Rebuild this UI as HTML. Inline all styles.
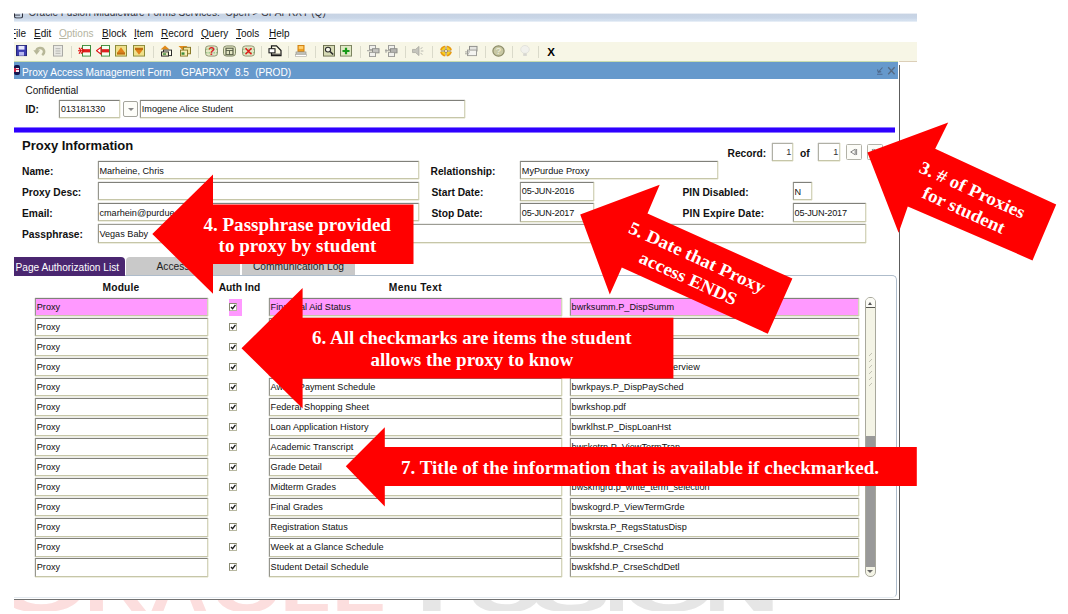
<!DOCTYPE html>
<html lang="en"><head><meta charset="utf-8"><title>Proxy Access Management Form</title>
<style>
html,body{margin:0;padding:0;background:#fff;}
body{width:1068px;height:614px;position:relative;overflow:hidden;font-family:"Liberation Sans",sans-serif;font-size:10px;color:#000;}
.a{position:absolute;white-space:nowrap;}
.b{font-weight:bold;}
.f{position:absolute;box-sizing:border-box;background:#fff;border-top:1px solid #80807a;border-left:1px solid #96968e;border-bottom:1px solid #c6c6a8;border-right:1px solid #d4d4bc;box-shadow:0 1px 0 #ededdf,1px 0 0 #f0f0e4,0 -1px 0 #ececea,-1px 0 0 #ececea;font-size:9.15px;line-height:16px;padding-left:1px;padding-top:0.7px;white-space:nowrap;overflow:hidden;color:#111;}
.pk{background:#ff99ff;}
.t{padding-left:0.4px;}
.pp{border-top-color:#9c9c94;}
.lt{border-top-color:#b0b0a6;border-left-color:#b0b0a6;color:#333;}
.r{font-size:9.15px;padding-top:0.4px;padding-left:0.6px;}
.f i{font-style:normal;letter-spacing:-0.18px;}
.lab{position:absolute;font-weight:bold;font-size:10.25px;line-height:12px;white-space:nowrap;color:#111;}
.cb{position:absolute;width:6.2px;height:5.8px;border:1px solid #8a8a72;border-right-color:#b8b8a0;border-bottom-color:#b8b8a0;background:#fff;}
.cb svg{position:absolute;left:0;top:0;}
.sep{position:absolute;top:45.5px;width:1px;height:12px;background:#dadaca;}
.ic{position:absolute;top:45px;height:12px;}
.m{position:absolute;top:26px;font-size:10px;line-height:12px;white-space:nowrap;color:#111;}
.m u{text-decoration:underline;}
.red{font-family:"Liberation Serif",serif;font-weight:bold;font-size:18px;fill:#fff;}
</style></head>
<body>
<div class="a" style="left:14px;top:13px;width:903px;height:8.1px;transform:translateY(0.6px);background:linear-gradient(#c7d3e3 0,#c9d6e7 55%,#d3dfee 75%,#d6e2f0 100%);overflow:hidden;"><div class="a" style="left:0.3px;top:-2px;width:6.6px;height:6px;border:1.2px solid #2a2c38;border-top:none;border-radius:0 0 2.5px 2.5px;"></div><div class="a" style="left:0.5px;top:0.6px;width:5px;height:1px;background:#4a4c58;"></div><div class="a" style="left:14.5px;top:-6.9px;font-size:10px;line-height:12px;color:#2e2e36;">Oracle Fusion Middleware Forms Services:&nbsp; Open &gt; GPAPRXY (Q)</div></div>
<div class="a" style="left:14px;top:22px;width:903px;height:20px;background:#fff;overflow:hidden;">
<span class="m" style="left:-4px;top:5.5px"><u>F</u>ile</span><span class="m" style="left:20px;top:5.5px"><u>E</u>dit</span><span class="m" style="left:45px;top:5.5px;color:#b4b4a0"><u>O</u>ptions</span><span class="m" style="left:88px;top:5.5px"><u>B</u>lock</span><span class="m" style="left:120px;top:5.5px"><u>I</u>tem</span><span class="m" style="left:147px;top:5.5px"><u>R</u>ecord</span><span class="m" style="left:187px;top:5.5px"><u>Q</u>uery</span><span class="m" style="left:222px;top:5.5px"><u>T</u>ools</span><span class="m" style="left:255px;top:5.5px"><u>H</u>elp</span>
</div>
<div class="a" style="left:14px;top:42px;width:903px;height:20px;background:#f7f6e6;"></div>
<div class="sep" style="left:70.5px"></div><div class="sep" style="left:152.5px"></div><div class="sep" style="left:197.5px"></div><div class="sep" style="left:261px"></div><div class="sep" style="left:288px"></div><div class="sep" style="left:315px"></div><div class="sep" style="left:360px"></div><div class="sep" style="left:404.5px"></div><div class="sep" style="left:431.5px"></div><div class="sep" style="left:458.5px"></div><div class="sep" style="left:484.5px"></div><div class="sep" style="left:511.5px"></div><div class="sep" style="left:538px"></div>
<svg class="ic" style="left:16px" width="11" height="12" viewBox="0 0 11 13" preserveAspectRatio="none"><rect x="0.5" y="0.5" width="10" height="11" fill="#3d3db0" stroke="#26267a"/><rect x="2.5" y="1" width="6" height="4" fill="#e8e8ff"/><rect x="3" y="7.5" width="5" height="4" fill="#b8b8f0"/></svg>
<svg class="ic" style="left:32.5px" width="13" height="12" viewBox="0 0 13 13" preserveAspectRatio="none"><path d="M9.2 11 C12.6 8.2 11 2.8 6.8 3.2 C4.6 3.4 3.6 5 3.6 6.6" fill="none" stroke="#b7b798" stroke-width="2.6"/><path d="M0.3 5.8h6.8L3.6 10.6z" fill="#b7b798"/></svg>
<svg class="ic" style="left:53px" width="10" height="12" viewBox="0 0 10 13" preserveAspectRatio="none"><rect x="0.5" y="0.5" width="9" height="11.5" fill="#e9e9e4" stroke="#a9a9a4"/><path d="M2.5 4h5M2.5 6.5h5M2.5 9h5" stroke="#b4b4b0" stroke-width="1"/></svg>
<svg class="ic" style="left:78px" width="13" height="12" viewBox="0 0 13 13" preserveAspectRatio="none"><rect x="4.5" y="0.5" width="8" height="11.5" fill="#f2fff0" stroke="#3c8c3c"/><rect x="5" y="4.5" width="7" height="3.5" fill="#e02020"/><path d="M0 6.2h6M3 3l3 3.2-3 3.2M1 3l2 3.2-2 3.2" stroke="#e01010" stroke-width="1.2" fill="none"/></svg>
<svg class="ic" style="left:96px" width="14" height="12" viewBox="0 0 14 13" preserveAspectRatio="none"><rect x="5.5" y="0.5" width="8" height="11.5" fill="#f2fff0" stroke="#3c8c3c"/><rect x="6" y="4.5" width="7" height="3.5" fill="#e02020"/><path d="M0.5 6.2L5 2.5v7.4z" fill="#fff" stroke="#e01010" stroke-width="1.1"/></svg>
<svg class="ic" style="left:114.5px" width="12" height="12" viewBox="0 0 12 13" preserveAspectRatio="none"><rect x="0.5" y="0.5" width="11" height="11.5" fill="#efe08a" stroke="#8a8a3a"/><path d="M2 8.5L6 2.5l4 6z" fill="#e08018"/><rect x="2" y="8" width="8" height="2.4" fill="#c06c10"/></svg>
<svg class="ic" style="left:133px" width="12" height="12" viewBox="0 0 12 13" preserveAspectRatio="none"><rect x="0.5" y="0.5" width="11" height="11.5" fill="#efe08a" stroke="#8a8a3a"/><path d="M2 5L6 10.5l4-5.5z" fill="#e08018"/><rect x="2" y="3" width="8" height="2.4" fill="#c06c10"/></svg>
<svg class="ic" style="left:160px" width="13" height="12" viewBox="0 0 13 13" preserveAspectRatio="none"><path d="M0.5 5L5 0.5 9.5 5z" fill="#e08a18"/><rect x="3.5" y="5.5" width="8" height="6" fill="#fffff0" stroke="#2a2a2a"/><rect x="1.5" y="7.5" width="7" height="4.5" fill="#e9e9c0" stroke="#2a2a2a"/><rect x="3" y="9" width="3" height="1.6" fill="#3c8c3c"/></svg>
<svg class="ic" style="left:178px" width="13" height="12" viewBox="0 0 13 13" preserveAspectRatio="none"><path d="M0.5 1h9L5 6z" fill="#e08a18"/><rect x="5.5" y="2.5" width="7" height="7" fill="#f2e6a0" stroke="#8a7a2a"/><rect x="2.5" y="5.5" width="7" height="6.5" fill="#f8efb8" stroke="#8a7a2a"/><rect x="3.5" y="8" width="3" height="2.6" fill="#3c8c3c"/></svg>
<svg class="ic" style="left:205px" width="13" height="12" viewBox="0 0 13 13" preserveAspectRatio="none"><rect x="0.5" y="1" width="12" height="11" rx="3" fill="#e4e6c4" stroke="#8c9470"/><path d="M1 4.5h11M1 8.5h11" stroke="#5fae5f" stroke-width="0.8" stroke-dasharray="1.5 1"/><text x="6.5" y="10.8" text-anchor="middle" font-family="Liberation Sans,sans-serif" font-weight="bold" font-size="11" fill="#d82020">?</text></svg>
<svg class="ic" style="left:223px" width="13" height="12" viewBox="0 0 13 13" preserveAspectRatio="none"><rect x="0.5" y="1" width="12" height="11" rx="3" fill="#e4e6c4" stroke="#7c8460"/><rect x="3" y="3.5" width="7" height="7" fill="none" stroke="#5a6048" stroke-width="1.2"/><path d="M3 6h7M6.5 6v4.5" stroke="#5a6048"/></svg>
<svg class="ic" style="left:241.5px" width="13" height="12" viewBox="0 0 13 13" preserveAspectRatio="none"><rect x="0.5" y="1" width="12" height="11" rx="3" fill="#e4e6c4" stroke="#8c9470"/><path d="M1 4.5h11M1 8.5h11" stroke="#5fae5f" stroke-width="0.8" stroke-dasharray="1.5 1"/><path d="M3.5 3.5l6 6.5M9.5 3.5l-6 6.5" stroke="#e01818" stroke-width="1.4"/></svg>
<svg class="ic" style="left:268px" width="14" height="12" viewBox="0 0 14 13" preserveAspectRatio="none"><path d="M3.5 1h5l4.5 5v5.5h-9.5z" fill="#fbf9e4" stroke="#1c1c1c" stroke-width="1.2"/><rect x="1" y="4" width="6" height="4.5" fill="#fff" stroke="#1c1c1c" stroke-width="1.1"/><path d="M3.5 10h9" stroke="#1c1c1c"/></svg>
<svg class="ic" style="left:295px" width="12" height="12" viewBox="0 0 12 13" preserveAspectRatio="none"><rect x="3" y="0.5" width="6" height="6.5" fill="#f0a020" stroke="#d08010"/><rect x="3.8" y="1.2" width="4.4" height="3" fill="#ffd070"/><rect x="1" y="7.5" width="10" height="2.4" fill="#c8c8c0" stroke="#8c8c84" stroke-width="0.6"/><rect x="0.5" y="10.5" width="11" height="1.8" fill="#fff" stroke="#a4a49c" stroke-width="0.6"/></svg>
<svg class="ic" style="left:322.5px" width="12" height="12" viewBox="0 0 12 13" preserveAspectRatio="none"><rect x="0.5" y="0.5" width="11" height="11.5" fill="#d6dab4" stroke="#6c7050"/><circle cx="5" cy="5" r="2.6" fill="#f4f4e8" stroke="#2c2c2c" stroke-width="1.1"/><path d="M7 7l3.2 3.4" stroke="#2c2c2c" stroke-width="1.6"/></svg>
<svg class="ic" style="left:340px" width="12" height="12" viewBox="0 0 12 13" preserveAspectRatio="none"><rect x="0.5" y="0.5" width="11" height="11.5" fill="#dfe8c4" stroke="#7c8460"/><path d="M6 3v7M2.5 6.5h7" stroke="#189a18" stroke-width="2.2"/></svg>
<svg class="ic" style="left:366.5px" width="13" height="12" viewBox="0 0 13 13" preserveAspectRatio="none"><rect x="2.5" y="0.5" width="6" height="4.5" fill="#f0f0ec" stroke="#9c9c98"/><rect x="5.5" y="4" width="6.5" height="4.5" fill="#c4c4c0" stroke="#8c8c88"/><rect x="2.5" y="8" width="6" height="4.5" fill="#f0f0ec" stroke="#9c9c98"/><path d="M0 6.2h5" stroke="#9c9c98"/></svg>
<svg class="ic" style="left:385px" width="13" height="12" viewBox="0 0 13 13" preserveAspectRatio="none"><rect x="3.5" y="0.5" width="6" height="4.5" fill="#f0f0ec" stroke="#9c9c98"/><rect x="5.5" y="4" width="6.5" height="4.5" fill="#b4b4b0" stroke="#8c8c88"/><rect x="3.5" y="8" width="6" height="4.5" fill="#f0f0ec" stroke="#9c9c98"/><path d="M0 6.2h5M1 4.5v4" stroke="#9c9c98"/></svg>
<svg class="ic" style="left:412px" width="12" height="12" viewBox="0 0 12 13" preserveAspectRatio="none"><path d="M0.5 4.8h3L7 1.5v10L3.5 8.2h-3z" fill="#c4c4bc" stroke="#a0a098" stroke-width="0.7"/><path d="M8.5 4l2-1.2M8.8 6.5h2.6M8.5 9l2 1.2" stroke="#b0b0a8" stroke-width="0.9"/></svg>
<svg class="ic" style="left:438.5px" width="14" height="12" viewBox="0 0 14 13" preserveAspectRatio="none"><circle cx="7" cy="6.5" r="5.2" fill="#f8d020" stroke="#e89a10" stroke-width="1.6"/><path d="M7 0v13M0.5 6.5h13" stroke="#f7f6e6" stroke-width="1.6"/><path d="M7 1.5v10M2 6.5h10" stroke="#8c6c3c" stroke-width="0.9"/><circle cx="7" cy="6.5" r="1.6" fill="#f7f6e6" stroke="#8c6c3c" stroke-width="0.7"/></svg>
<svg class="ic" style="left:465px" width="13" height="12" viewBox="0 0 13 13" preserveAspectRatio="none"><rect x="4.5" y="1.5" width="7.5" height="5" fill="#e4e4e0" stroke="#8c8c88"/><rect x="2.5" y="5.5" width="9" height="6" fill="#f4f4f0" stroke="#9c9c98"/><path d="M0 7.5h5M0 9.5h4" stroke="#9c9c98" stroke-width="0.9"/></svg>
<svg class="ic" style="left:492px" width="13" height="12" viewBox="0 0 13 13" preserveAspectRatio="none"><circle cx="6.5" cy="6.5" r="5.6" fill="#c8c8a4" stroke="#8c8c68" stroke-width="1.2"/><text x="6.5" y="10" text-anchor="middle" font-family="Liberation Sans,sans-serif" font-size="9.5" fill="#f4f4e0">?</text></svg>
<svg class="ic" style="left:520px" width="10" height="12" viewBox="0 0 10 13" preserveAspectRatio="none"><circle cx="5" cy="4.8" r="4.3" fill="#f1f1ec" stroke="#deded8" stroke-width="0.8"/><rect x="3.2" y="9" width="3.6" height="2.8" fill="#d6d6d0"/></svg>
<div class="a b" style="left:547.3px;top:46px;font-size:11.5px;line-height:13px;color:#000;">X</div>
<div class="a" style="left:14px;top:61px;width:884px;height:1px;background:#bcd6a0;opacity:0.8;"></div>
<div class="a" style="left:898.9px;top:64.5px;width:1.1px;height:534.5px;background:#5c5c5c;"></div><div class="a" style="left:899px;top:61.2px;width:18px;height:0.9px;background:#dccfb8;"></div>
<div class="a" style="left:14px;top:598.5px;width:885.5px;height:1px;background:#707070;"></div>
<div class="a" style="left:14px;top:61.8px;width:884.2px;height:17.5px;background:#6699cc;overflow:hidden;"><div class="a" style="left:0;top:3px;width:6px;height:10px;background:#14144e;border-radius:2px;"></div><div class="a" style="left:0;top:6px;width:5px;height:4.5px;background:#c8284a;"></div><div class="a" style="left:2px;top:6px;width:2.6px;height:1.5px;background:#f4ecf4;"></div><div class="a" style="left:1.5px;top:8.6px;width:3.5px;height:1.3px;background:#f4ecf4;"></div><div class="a" style="left:8px;top:4.9px;font-size:10.15px;line-height:12px;color:#fff;">Proxy Access Management Form <span class="a" style="left:159px;top:0">GPAPRXY</span><span class="a" style="left:212.9px;top:0">8.5</span><span class="a" style="left:233.2px;top:0">(PROD)</span></div><svg class="a" style="left:862px;top:4px" width="20" height="10" viewBox="0 0 20 10"><path d="M6.5 1.5L2.5 6M1.5 3.5L2.3 6.3 5.2 5.6M1 8.3h5.5" stroke="#4e6a8e" stroke-width="1.1" fill="none"/><path d="M12.2 1.3l6.4 7M18.6 1.3l-6.4 7" stroke="#566a82" stroke-width="1.3"/></svg></div>
<div class="a" style="left:25.5px;top:84.6px;font-size:10px;line-height:12px;color:#111;">Confidential</div>
<div class="lab" style="left:25.5px;top:103.8px;font-size:10px;">ID:</div>
<div class="f" style="left:59px;top:99.8px;width:61px;height:18.6px;line-height:17px;font-size:8.8px;"><span>013181330</span></div>
<div class="a" style="left:122.5px;top:100.6px;width:15.8px;height:16.8px;border:1px solid #a4a49c;border-radius:2px;background:#fdfdf9;box-sizing:border-box;"><div class="a" style="left:4px;top:6px;border-left:3px solid transparent;border-right:3px solid transparent;border-top:3.5px solid #888;"></div></div>
<div class="f" style="left:139.8px;top:99.8px;width:325.5px;height:18.6px;line-height:17px;"><span>Imogene Alice Student</span></div>
<div class="a" style="left:14px;top:127px;width:880.5px;height:6px;background:#2e00ff;opacity:0.55;"></div><div class="a" style="left:14px;top:128px;width:880.5px;height:4px;background:#2e00ff;"></div>
<div class="a b" style="left:22px;top:137.6px;font-size:13px;line-height:15px;color:#111;">Proxy Information</div>
<div class="lab" style="left:22px;top:166.1px;">Name:</div>
<div class="lab" style="left:22px;top:187.1px;">Proxy Desc:</div>
<div class="lab" style="left:22px;top:208.1px;">Email:</div>
<div class="lab" style="left:22px;top:229.2px;">Passphrase:</div>
<div class="f t" style="left:98px;top:161px;width:320.5px;height:18.2px;line-height:16.2px;"><span>Marheine, Chris</span></div>
<div class="f t" style="left:98px;top:182.2px;width:320.5px;height:18.2px;line-height:16.2px;"><span></span></div>
<div class="f t" style="left:98px;top:203px;width:320.5px;height:18.4px;line-height:16.4px;"><span>cmarhein@purdue.edu</span></div>
<div class="f t pp" style="left:98px;top:224.4px;width:768px;height:18.2px;line-height:16.2px;"><span>Vegas Baby</span></div>
<div class="lab" style="left:430.5px;top:166.1px;">Relationship:</div>
<div class="lab" style="left:431.5px;top:187.1px;">Start Date:</div>
<div class="lab" style="left:431.5px;top:208.1px;">Stop Date:</div>
<div class="f" style="left:519.8px;top:161.3px;width:198.5px;height:18.2px;line-height:16.2px;"><span>MyPurdue Proxy</span></div>
<div class="f" style="left:519.8px;top:181.8px;width:74.5px;height:18.8px;line-height:16.8px;"><span><i>05-JUN-2016</i></span></div>
<div class="f" style="left:519.8px;top:203px;width:74.5px;height:18.8px;line-height:16.8px;"><span><i>05-JUN-2017</i></span></div>
<div class="lab" style="left:682.5px;top:187px;">PIN Disabled:</div>
<div class="lab" style="left:682.5px;top:208.1px;"><span style="letter-spacing:0.13px">PIN Expire Date:</span></div>
<div class="f" style="left:792.6px;top:182.3px;width:19.3px;height:18.2px;line-height:16.2px;"><span>N</span></div>
<div class="f" style="left:792.6px;top:203.4px;width:73.4px;height:18.4px;line-height:16.4px;"><span><i>05-JUN-2017</i></span></div>
<div class="lab" style="left:727.5px;top:147.8px;">Record:</div>
<div class="f lt" style="left:771.5px;top:143.4px;width:21px;height:17.8px;line-height:15.8px;"><span><span style="position:absolute;right:0.2px">1</span></span></div>
<div class="lab" style="left:800px;top:147.8px;">of</div>
<div class="f lt" style="left:818px;top:143.4px;width:21.6px;height:17.8px;line-height:15.8px;"><span><span style="position:absolute;right:0.2px">1</span></span></div>
<div class="a" style="left:846.2px;top:143.5px;width:15.4px;height:16px;border:1px solid #b2b2a8;border-radius:1.5px;background:#fcfcf8;box-sizing:border-box;"><svg class="a" style="left:3px;top:3px" width="8" height="8" viewBox="0 0 8 8"><path d="M0.7 4L5.2 1.2v5.6zM6.6 1v6" fill="none" stroke="#777" stroke-width="0.9"/></svg></div>
<div class="a" style="left:867.3px;top:143.5px;width:15.4px;height:16px;border:1px solid #b2b2a8;border-radius:1.5px;background:#fcfcf8;box-sizing:border-box;"><svg class="a" style="left:3px;top:3px" width="8" height="8" viewBox="0 0 8 8"><path d="M7.3 4L2.8 1.2v5.6zM1.4 1v6" fill="none" stroke="#777" stroke-width="0.9"/></svg></div>
<div class="a" style="left:126px;top:257.2px;width:114px;height:18.4px;background:#c9c9c9;border-radius:4px 4px 0 0;font-size:10.25px;line-height:20.2px;overflow:hidden;text-align:center;color:#222;">Access Log</div>
<div class="a" style="left:242px;top:257.2px;width:113px;height:18.4px;background:#c9c9c9;border-radius:4px 4px 0 0;font-size:10.25px;line-height:20.2px;overflow:hidden;text-align:center;color:#222;">Communication Log</div>
<div class="a" style="left:14px;top:275.2px;width:883px;height:323px;border:1px solid #aebccb;border-bottom-color:#e4eaf0;border-radius:0 5px 5px 0;border-left:none;box-sizing:border-box;"></div>
<div class="a" style="left:14px;top:257.2px;width:110.5px;height:18.6px;background:#4a2670;border-radius:0 4px 0 0;color:#fff;font-size:10.15px;line-height:18px;"><span class="a" style="left:1.5px;top:2.3px">Page Authorization List</span></div>
<div class="lab" style="left:71px;top:281.8px;width:100px;text-align:center;letter-spacing:0.17px;">Module</div>
<div class="lab" style="left:218.7px;top:281.8px;">Auth Ind</div>
<div class="lab" style="left:365.4px;top:281.8px;width:100px;text-align:center;letter-spacing:0.36px;">Menu Text</div>
<div class="f r pk" style="left:35.2px;top:297.6px;width:173.3px;height:18.6px;line-height:16.6px;"><span>Proxy</span></div>
<div class="a" style="left:229px;top:298.9px;width:12.5px;height:17px;background:#ff99ff;"></div>
<div class="cb" style="left:229.3px;top:303.1px;"><svg width="6.2" height="5.8" viewBox="0 0 7 7"><path d="M1 3.6L2.9 5.6 6.4 1" fill="none" stroke="#1a1a1a" stroke-width="1.7"/></svg></div>
<div class="f r pk" style="left:269px;top:297.6px;width:292.5px;height:18.6px;line-height:16.6px;"><span>Financial Aid Status</span></div>
<div class="f r pk" style="left:570px;top:297.6px;width:288.5px;height:18.6px;line-height:16.6px;"><span>bwrksumm.P_DispSumm</span></div>
<div class="f r" style="left:35.2px;top:317.63px;width:173.3px;height:18.6px;line-height:16.6px;"><span>Proxy</span></div>
<div class="cb" style="left:229.3px;top:323.13px;"><svg width="6.2" height="5.8" viewBox="0 0 7 7"><path d="M1 3.6L2.9 5.6 6.4 1" fill="none" stroke="#1a1a1a" stroke-width="1.7"/></svg></div>
<div class="f r" style="left:269px;top:317.63px;width:292.5px;height:18.6px;line-height:16.6px;"><span>Award Overview</span></div>
<div class="f r" style="left:570px;top:317.63px;width:288.5px;height:18.6px;line-height:16.6px;"><span>bwrkrhst.P_DispAwdYr</span></div>
<div class="f r" style="left:35.2px;top:337.66px;width:173.3px;height:18.6px;line-height:16.6px;"><span>Proxy</span></div>
<div class="cb" style="left:229.3px;top:343.16px;"><svg width="6.2" height="5.8" viewBox="0 0 7 7"><path d="M1 3.6L2.9 5.6 6.4 1" fill="none" stroke="#1a1a1a" stroke-width="1.7"/></svg></div>
<div class="f r" style="left:269px;top:337.66px;width:292.5px;height:18.6px;line-height:16.6px;"><span>Award History</span></div>
<div class="f r" style="left:570px;top:337.66px;width:288.5px;height:18.6px;line-height:16.6px;"><span>bwrkrhst.P_DispAwdHst</span></div>
<div class="f r" style="left:35.2px;top:357.69px;width:173.3px;height:18.6px;line-height:16.6px;"><span>Proxy</span></div>
<div class="cb" style="left:229.3px;top:363.19px;"><svg width="6.2" height="5.8" viewBox="0 0 7 7"><path d="M1 3.6L2.9 5.6 6.4 1" fill="none" stroke="#1a1a1a" stroke-width="1.7"/></svg></div>
<div class="f r" style="left:269px;top:357.69px;width:292.5px;height:18.6px;line-height:16.6px;"><span>Cost of Attendance</span></div>
<div class="f r" style="left:570px;top:357.69px;width:288.5px;height:18.6px;line-height:16.6px;"><span><b style="font-weight:normal;letter-spacing:0.05px">bwrkolnk.P_DisplCostOverview</b></span></div>
<div class="f r" style="left:35.2px;top:377.72px;width:173.3px;height:18.6px;line-height:16.6px;"><span>Proxy</span></div>
<div class="cb" style="left:229.3px;top:383.22px;"><svg width="6.2" height="5.8" viewBox="0 0 7 7"><path d="M1 3.6L2.9 5.6 6.4 1" fill="none" stroke="#1a1a1a" stroke-width="1.7"/></svg></div>
<div class="f r" style="left:269px;top:377.72px;width:292.5px;height:18.6px;line-height:16.6px;"><span>Award Payment Schedule</span></div>
<div class="f r" style="left:570px;top:377.72px;width:288.5px;height:18.6px;line-height:16.6px;"><span>bwrkpays.P_DispPaySched</span></div>
<div class="f r" style="left:35.2px;top:397.75px;width:173.3px;height:18.6px;line-height:16.6px;"><span>Proxy</span></div>
<div class="cb" style="left:229.3px;top:403.25px;"><svg width="6.2" height="5.8" viewBox="0 0 7 7"><path d="M1 3.6L2.9 5.6 6.4 1" fill="none" stroke="#1a1a1a" stroke-width="1.7"/></svg></div>
<div class="f r" style="left:269px;top:397.75px;width:292.5px;height:18.6px;line-height:16.6px;"><span>Federal Shopping Sheet</span></div>
<div class="f r" style="left:570px;top:397.75px;width:288.5px;height:18.6px;line-height:16.6px;"><span>bwrkshop.pdf</span></div>
<div class="f r" style="left:35.2px;top:417.78px;width:173.3px;height:18.6px;line-height:16.6px;"><span>Proxy</span></div>
<div class="cb" style="left:229.3px;top:423.28px;"><svg width="6.2" height="5.8" viewBox="0 0 7 7"><path d="M1 3.6L2.9 5.6 6.4 1" fill="none" stroke="#1a1a1a" stroke-width="1.7"/></svg></div>
<div class="f r" style="left:269px;top:417.78px;width:292.5px;height:18.6px;line-height:16.6px;"><span>Loan Application History</span></div>
<div class="f r" style="left:570px;top:417.78px;width:288.5px;height:18.6px;line-height:16.6px;"><span>bwrklhst.P_DispLoanHst</span></div>
<div class="f r" style="left:35.2px;top:437.81px;width:173.3px;height:18.6px;line-height:16.6px;"><span>Proxy</span></div>
<div class="cb" style="left:229.3px;top:443.31px;"><svg width="6.2" height="5.8" viewBox="0 0 7 7"><path d="M1 3.6L2.9 5.6 6.4 1" fill="none" stroke="#1a1a1a" stroke-width="1.7"/></svg></div>
<div class="f r" style="left:269px;top:437.81px;width:292.5px;height:18.6px;line-height:16.6px;"><span>Academic Transcript</span></div>
<div class="f r" style="left:570px;top:437.81px;width:288.5px;height:18.6px;line-height:16.6px;"><span>bwskotrn.P_ViewTermTran</span></div>
<div class="f r" style="left:35.2px;top:457.84px;width:173.3px;height:18.6px;line-height:16.6px;"><span>Proxy</span></div>
<div class="cb" style="left:229.3px;top:463.34px;"><svg width="6.2" height="5.8" viewBox="0 0 7 7"><path d="M1 3.6L2.9 5.6 6.4 1" fill="none" stroke="#1a1a1a" stroke-width="1.7"/></svg></div>
<div class="f r" style="left:269px;top:457.84px;width:292.5px;height:18.6px;line-height:16.6px;"><span>Grade Detail</span></div>
<div class="f r" style="left:570px;top:457.84px;width:288.5px;height:18.6px;line-height:16.6px;"><span>bwskgrde.P_ViewTermGrde</span></div>
<div class="f r" style="left:35.2px;top:477.87px;width:173.3px;height:18.6px;line-height:16.6px;"><span>Proxy</span></div>
<div class="cb" style="left:229.3px;top:483.37px;"><svg width="6.2" height="5.8" viewBox="0 0 7 7"><path d="M1 3.6L2.9 5.6 6.4 1" fill="none" stroke="#1a1a1a" stroke-width="1.7"/></svg></div>
<div class="f r" style="left:269px;top:477.87px;width:292.5px;height:18.6px;line-height:16.6px;"><span>Midterm Grades</span></div>
<div class="f r" style="left:570px;top:477.87px;width:288.5px;height:18.6px;line-height:16.6px;"><span>bwskmgrd.p_write_term_selection</span></div>
<div class="f r" style="left:35.2px;top:497.9px;width:173.3px;height:18.6px;line-height:16.6px;"><span>Proxy</span></div>
<div class="cb" style="left:229.3px;top:503.4px;"><svg width="6.2" height="5.8" viewBox="0 0 7 7"><path d="M1 3.6L2.9 5.6 6.4 1" fill="none" stroke="#1a1a1a" stroke-width="1.7"/></svg></div>
<div class="f r" style="left:269px;top:497.9px;width:292.5px;height:18.6px;line-height:16.6px;"><span>Final Grades</span></div>
<div class="f r" style="left:570px;top:497.9px;width:288.5px;height:18.6px;line-height:16.6px;"><span>bwskogrd.P_ViewTermGrde</span></div>
<div class="f r" style="left:35.2px;top:517.93px;width:173.3px;height:18.6px;line-height:16.6px;"><span>Proxy</span></div>
<div class="cb" style="left:229.3px;top:523.43px;"><svg width="6.2" height="5.8" viewBox="0 0 7 7"><path d="M1 3.6L2.9 5.6 6.4 1" fill="none" stroke="#1a1a1a" stroke-width="1.7"/></svg></div>
<div class="f r" style="left:269px;top:517.93px;width:292.5px;height:18.6px;line-height:16.6px;"><span>Registration Status</span></div>
<div class="f r" style="left:570px;top:517.93px;width:288.5px;height:18.6px;line-height:16.6px;"><span>bwskrsta.P_RegsStatusDisp</span></div>
<div class="f r" style="left:35.2px;top:537.96px;width:173.3px;height:18.6px;line-height:16.6px;"><span>Proxy</span></div>
<div class="cb" style="left:229.3px;top:543.46px;"><svg width="6.2" height="5.8" viewBox="0 0 7 7"><path d="M1 3.6L2.9 5.6 6.4 1" fill="none" stroke="#1a1a1a" stroke-width="1.7"/></svg></div>
<div class="f r" style="left:269px;top:537.96px;width:292.5px;height:18.6px;line-height:16.6px;"><span>Week at a Glance Schedule</span></div>
<div class="f r" style="left:570px;top:537.96px;width:288.5px;height:18.6px;line-height:16.6px;"><span>bwskfshd.P_CrseSchd</span></div>
<div class="f r" style="left:35.2px;top:557.99px;width:173.3px;height:18.6px;line-height:16.6px;"><span>Proxy</span></div>
<div class="cb" style="left:229.3px;top:563.49px;"><svg width="6.2" height="5.8" viewBox="0 0 7 7"><path d="M1 3.6L2.9 5.6 6.4 1" fill="none" stroke="#1a1a1a" stroke-width="1.7"/></svg></div>
<div class="f r" style="left:269px;top:557.99px;width:292.5px;height:18.6px;line-height:16.6px;"><span>Student Detail Schedule</span></div>
<div class="f r" style="left:570px;top:557.99px;width:288.5px;height:18.6px;line-height:16.6px;"><span>bwskfshd.P_CrseSchdDetl</span></div>
<div class="a" style="left:865px;top:297px;width:10.5px;height:280px;box-sizing:border-box;border:1px solid #a8a89c;border-radius:5px;background:#f4f4e6;overflow:hidden;"><div class="a" style="left:0;top:137.5px;width:9px;height:131px;background:#999;"></div><div class="a" style="left:0;top:0;width:9px;height:9px;background:#fbfbf5;"></div><div class="a" style="left:0;top:9px;width:9px;height:1.2px;background:#55554e;"></div><div class="a" style="left:1.8px;top:4px;border-left:2.5px solid transparent;border-right:2.5px solid transparent;border-bottom:3px solid #555;"></div><div class="a" style="left:1.2px;top:271.5px;border-left:3px solid transparent;border-right:3px solid transparent;border-top:3.5px solid #666;"></div><svg class="a" style="left:2px;top:52px" width="6" height="40" viewBox="0 0 6 40"><path d="M1 6l3-3M1 12l3-3M1 18l3-3M1 24l3-3M1 30l3-3M1 36l3-3" stroke="#b4b4a4" stroke-width="0.8"/></svg></div>
<div class="a" style="left:14px;top:599.6px;width:884px;height:11.8px;overflow:hidden;font-weight:bold;font-size:72px;line-height:72px;"><span class="a" style="left:-20.7px;top:-48.2px;transform-origin:0 0;transform:scaleX(1.718);color:#fcdede;">O</span><span class="a" style="left:70px;top:-48.2px;transform-origin:0 0;transform:scaleX(1.245);color:#fcdede;">R</span><span class="a" style="left:134.85px;top:-48.2px;transform-origin:0 0;transform:scaleX(1.15);color:#fcdede;">A</span><span class="a" style="left:196.3px;top:-48.2px;transform-origin:0 0;transform:scaleX(1.327);color:#fcdede;">C</span><span class="a" style="left:265.9px;top:-48.2px;transform-origin:0 0;transform:scaleX(1.145);color:#fcdede;">L</span><span class="a" style="left:317.5px;top:-48.2px;transform-origin:0 0;transform:scaleX(1.119);color:#fcdede;">E</span><span class="a" style="left:376px;top:-48.2px;transform-origin:0 0;transform:scaleX(1);color:#fcdede;">&nbsp;</span><span class="a" style="left:401.3px;top:-48.2px;transform-origin:0 0;transform:scaleX(1.68);color:#e6e6e6;">F</span><span class="a" style="left:451.2px;top:-48.2px;transform-origin:0 0;transform:scaleX(1.568);color:#e6e6e6;">U</span><span class="a" style="left:516.7px;top:-48.2px;transform-origin:0 0;transform:scaleX(1.66);color:#e6e6e6;">S</span><span class="a" style="left:590px;top:-48.2px;transform-origin:0 0;transform:scaleX(1.25);color:#e6e6e6;">I</span><span class="a" style="left:607.3px;top:-48.2px;transform-origin:0 0;transform:scaleX(1.718);color:#e6e6e6;">O</span><span class="a" style="left:689.1px;top:-48.2px;transform-origin:0 0;transform:scaleX(1.477);color:#e6e6e6;">N</span></div>
<svg class="a" style="left:0;top:0" width="1068" height="614" viewBox="0 0 1068 614">
<polygon fill="#ff0000" points="152.3,234.1 213,174.6 213,204.6 413.5,204.6 413.5,264 213,264 213,293.7"/>
<text class="red" x="297.2" y="230.6" text-anchor="middle" textLength="187.5" lengthAdjust="spacingAndGlyphs">4. Passphrase provided</text>
<text class="red" x="297.5" y="251.9" text-anchor="middle" textLength="157.8" lengthAdjust="spacingAndGlyphs">to proxy by student</text>
<polygon fill="#ff0000" points="241.5,348.3 302.6,288 302.6,317.7 673.4,317.7 673.4,378.4 302.6,378.4 302.6,408.5"/>
<text class="red" x="471.9" y="343.8" text-anchor="middle" textLength="319.6" lengthAdjust="spacingAndGlyphs">6. All checkmarks are items the student</text>
<text class="red" x="471.8" y="366" text-anchor="middle" textLength="202.8" lengthAdjust="spacingAndGlyphs">allows the proxy to know</text>
<polygon fill="#ff0000" points="345.8,466.2 384.8,427.3 384.8,447 916.8,447 916.8,486 384.8,486 384.8,506.4"/>
<text class="red" x="640" y="473.5" text-anchor="middle" textLength="478" lengthAdjust="spacingAndGlyphs">7. Title of the information that is available if checkmarked.</text>
<polygon fill="#ff0000" points="580.2,214.6 659.7,184.7 647.5,213.4 792.4,278.6 767.8,333.8 621.8,267.5 609.8,294.6"/><g transform="translate(580.5,215.7) rotate(24.5)"><text class="red" x="123.4" y="-4.4" text-anchor="middle" textLength="147.7" lengthAdjust="spacingAndGlyphs">5. Date that Proxy</text><text class="red" x="124" y="18.3" text-anchor="middle" textLength="105.2" lengthAdjust="spacingAndGlyphs">access ENDS</text></g>
<polygon fill="#ff0000" points="867.4,152.4 948.2,122.4 935.2,148.8 1056.2,204.6 1032.5,260.4 907.8,206.4 898.6,232.7"/><g transform="translate(867.7,152.8) rotate(24.5)"><text class="red" x="110.6" y="-3.7" text-anchor="middle" textLength="113.9" lengthAdjust="spacingAndGlyphs">3. # of Proxies</text><text class="red" x="111.3" y="18.3" text-anchor="middle" textLength="89" lengthAdjust="spacingAndGlyphs">for student</text></g>
</svg>
</body></html>
